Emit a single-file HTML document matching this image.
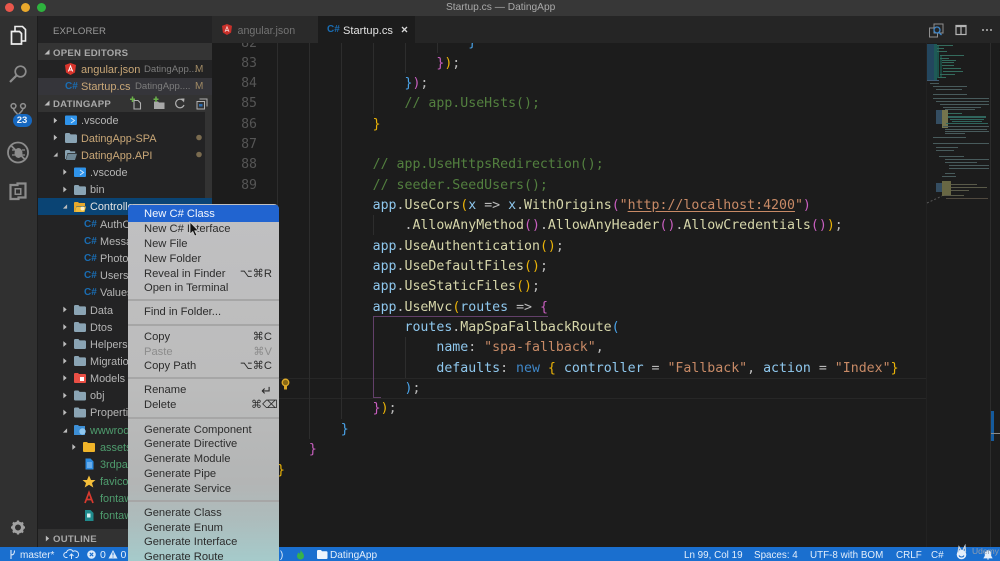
<!DOCTYPE html>
<html><head><meta charset="utf-8"><title>Startup.cs — DatingApp</title>
<style>
html,body{margin:0;padding:0;width:1000px;height:561px;overflow:hidden;background:#1e1e1e}
#root{position:relative;width:1000px;height:561px;overflow:hidden;font-family:"Liberation Sans",sans-serif;background:#1c1c1c;filter:blur(.35px)}
.a{position:absolute}
.t{position:absolute;white-space:pre;line-height:16px;height:16px}
/* sidebar */
.s{font-size:10.9px;color:#b5b5b5;margin-top:1px}
.o{color:#c9a777}.g{color:#4f9d6e}.w{color:#e4e4e4}
.h{font-size:9.6px;font-weight:bold;color:#a9a9a9;letter-spacing:.25px;margin-top:2px}
.cs{font-size:10px;font-weight:bold;color:#1a6db3;margin-top:1px}
/* code */
.l{position:absolute;left:277px;white-space:pre;height:20px;line-height:20px;margin-top:1.5px;font-family:"DejaVu Sans Mono","Liberation Mono",monospace;font-size:13.24px;color:#d4d4d4}
.n{position:absolute;left:227px;width:30px;text-align:right;height:20px;line-height:20px;margin-top:1.5px;font-family:"DejaVu Sans Mono","Liberation Mono",monospace;font-size:13.24px;color:#555}
.c{color:#53803f}.b{color:#8fc8ee}.f{color:#d6d6aa}.y{color:#eab308}.p{color:#c95fc0}.u{color:#4aa3e8}.q{color:#c88a66}.k{color:#3f87c8}.d{color:#bbb}
.gd{position:absolute;width:1px;background:#2d2d2d}
/* menu */
#m{position:absolute;left:128px;top:204px;width:151px;height:358px;border-radius:5px 5px 0 0;background:linear-gradient(#c0c0c2 0,#bcbcbc 50%,#b3b5b5 78%,#adbcbc 88%,#a5cbcb 100%);font-size:11.2px;color:#2c2c2c;overflow:hidden}
#m .i{position:absolute;left:16px;white-space:pre;line-height:15px;height:15px;margin-top:1px}
#m .r{position:absolute;right:7px;white-space:pre;line-height:15px;height:15px;margin-top:1px}
#m .sp{position:absolute;left:0;right:0;height:2px;background:#a6a6a6}
/* status */
.st{position:absolute;top:548px;white-space:pre;line-height:15px;height:15px;font-size:9.85px;color:#e4eefa}
</style></head><body><div id="root">

<svg width="0" height="0" style="position:absolute">
<defs>
<symbol id="fld" viewBox="0 0 12 10"><path d="M0 1.2C0 .5.5 0 1.2 0H4.4L5.6 1.4H10.8C11.5 1.4 12 1.9 12 2.6V8.8C12 9.5 11.5 10 10.8 10H1.2C.5 10 0 9.500 0 8.800Z" fill="#8aa4b4"/></symbol>
<symbol id="fldo" viewBox="0 0 12 10"><path d="M0 1.2C0 .5.5 0 1.2 0H4.4L5.6 1.4H10.200V3H2.500L.8 9.200 0 8.800Z" fill="#8aa4b4"/><path d="M2.800 3.800H12L10 10H1Z" fill="#6f8795"/></symbol>
<symbol id="tr" viewBox="0 0 6 8"><path d="M1 .5L5 4 1 7.500Z" fill="#bdbdbd"/></symbol>
<symbol id="td" viewBox="0 0 6 6"><path d="M5.500 .5V5.500H.5Z" fill="#bdbdbd"/></symbol>
</defs>
</svg>

<!-- title bar -->
<div class="a" style="left:0;top:0;width:1000px;height:16px;background:#373737"></div>
<div class="a" style="left:4.500px;top:2.500px;width:9px;height:9px;border-radius:50%;background:#e9574c"></div>
<div class="a" style="left:20.500px;top:2.500px;width:9px;height:9px;border-radius:50%;background:#eaa92c"></div>
<div class="a" style="left:36.500px;top:2.500px;width:9px;height:9px;border-radius:50%;background:#2eb33e"></div>
<div class="t" style="left:446px;top:0;font-size:10.200px;color:#a9a9a9">Startup.cs — DatingApp</div>

<!-- activity bar -->
<div class="a" style="left:0;top:16px;width:37px;height:531px;background:#303030"></div>
<svg class="a" style="left:0;top:16px" width="37" height="531" viewBox="0 16 37 531" fill="none">
 <path d="M15 26.500H22.500L25.500 29.500V41H15Z" stroke="#eee" stroke-width="1.600" fill="#303030" transform="translate(0,0)"/>
 <path d="M11.500 31.500H19.500L21.500 33.500V44H11.500Z" stroke="#eee" stroke-width="1.700" fill="#303030"/>
 <circle cx="20.500" cy="71.500" r="5.300" stroke="#8c8c8c" stroke-width="1.700"/>
 <path d="M16.500 75.500L10 82" stroke="#8c8c8c" stroke-width="2.200"/>
 <circle cx="13.500" cy="106" r="2.400" stroke="#909090" stroke-width="1.500"/><circle cx="23" cy="106" r="2.400" stroke="#909090" stroke-width="1.500"/>
 <path d="M13.500 108.500C14 112 18 113 18 116M23 108.500C22.500 112 18.500 113 18 116" stroke="#909090" stroke-width="1.500"/>
 <circle cx="18" cy="152.500" r="10" stroke="#8c8c8c" stroke-width="1.800"/>
 <path d="M11 145.500L25 159.500" stroke="#8c8c8c" stroke-width="1.800"/>
 <ellipse cx="18.500" cy="153" rx="4" ry="5" fill="#8c8c8c"/>
 <path d="M12 150h3M22 150h3M12 155h3M22 155h3" stroke="#8c8c8c" stroke-width="1.200"/>
 <path d="M10.500 185H17.500V183.500H25.500V197.500H18.500V199H10.500Z" stroke="#8c8c8c" stroke-width="2.200"/>
 <rect x="14.500" y="188" width="7" height="7" fill="#8c8c8c"/>
 <rect x="16" y="189.500" width="4" height="4" fill="#303030"/>
 <circle cx="18" cy="527.500" r="4.500" stroke="#a2a2a2" stroke-width="3"/>
 <path d="M18 520.500v2.500M18 532v2.500M11 527.500h2.500M22.500 527.500H25M13 522.500l1.800 1.800M21.200 530.700l1.800 1.800M13 532.500l1.800-1.800M21.200 524.300l1.800-1.800" stroke="#a2a2a2" stroke-width="2.200"/>
</svg>
<div class="a" style="left:12.500px;top:113.500px;width:19px;height:13.500px;border-radius:7px;background:#1668c0;color:#eaf2fb;font-size:9.500px;font-weight:bold;text-align:center;line-height:14px">23</div>

<!-- sidebar -->
<div class="a" style="left:38px;top:16px;width:174px;height:531px;background:#232324"></div>
<div class="a" style="left:205px;top:112px;width:7px;height:95px;background:#333"></div>
<div class="a" style="left:38px;top:43px;width:174px;height:17px;background:#343434"></div>
<div class="a" style="left:38px;top:78px;width:174px;height:17px;background:#35353a"></div>
<div class="a" style="left:38px;top:95px;width:174px;height:17px;background:#333"></div>
<div class="a" style="left:38px;top:198px;width:174px;height:17px;background:#0a4474"></div>
<div class="a" style="left:38px;top:529px;width:174px;height:18px;background:#323232"></div>

<div class="t" style="left:53px;top:24px;font-size:9.600px;color:#9a9a9a;letter-spacing:.1px">EXPLORER</div>
<svg class="a" style="left:44px;top:49px" width="6" height="6"><use href="#td"/></svg>
<div class="t h" style="left:53px;top:44px">OPEN EDITORS</div>
<svg class="a" style="left:65px;top:63px" width="11" height="12" viewBox="0 0 11 12"><path d="M5.500 0L11 2 10 9.500 5.500 12 1 9.500 0 2Z" fill="#d9342c"/><path d="M3.300 8.500L5.500 3 7.700 8.500M4 7H7" stroke="#fff" stroke-width="1" fill="none"/></svg>
<div class="t s o" style="left:81px;top:61px;font-weight:500;font-size:11px">angular.json</div>
<div class="t" style="left:144px;top:62px;font-size:9.600px;color:#7d7d7d">DatingApp...</div>
<div class="t" style="left:195px;top:62px;font-size:10px;color:#a08a64">M</div>
<div class="t cs" style="left:65px;top:78px">C#</div>
<div class="t s o" style="left:81px;top:78px;font-size:11px">Startup.cs</div>
<div class="t" style="left:135px;top:79px;font-size:9.600px;color:#7d7d7d">DatingApp....</div>
<div class="t" style="left:195px;top:79px;font-size:10px;color:#a08a64">M</div>

<svg class="a" style="left:44px;top:100px" width="6" height="6"><use href="#td"/></svg>
<div class="t h" style="left:53px;top:95px">DATINGAPP</div>
<svg class="a" style="left:128px;top:96px" width="84" height="15" fill="none">
 <path d="M6 4.500H10L12.500 7V13H6Z" stroke="#b0b0b0" stroke-width="1.100"/><path d="M4.500 0.500V6M2 3.200H7" stroke="#6bb24a" stroke-width="1.500"/>
 <path d="M26 5.500H30L31 6.500H36.500V13H26Z" fill="#a8a8a8"/><path d="M28 0.500V6M25.500 3.200H30.500" stroke="#6bb24a" stroke-width="1.500"/>
 <path d="M55.500 5A4.300 4.300 0 1 0 56 9" stroke="#b0b0b0" stroke-width="1.200"/><path d="M53 2.500L56.500 2.500 56 6.500Z" fill="#b0b0b0"/>
 <rect x="69" y="5.500" width="7.500" height="7.500" stroke="#b0b0b0"/><path d="M71.500 3H79V10.500" stroke="#b0b0b0"/><rect x="71" y="8" width="3.500" height="2.500" fill="#2a6bb0"/>
</svg>

<!-- tree -->
<svg class="a" style="left:38px;top:112px" width="174" height="417" viewBox="38 112 174 417" fill="none">
 <use href="#tr" x="53" y="117" width="5" height="7"/>
 <rect x="65" y="115.500" width="12" height="9.500" rx="1" fill="#2f93ea"/><path d="M71 118l3.500 2.500-3.500 2.500" stroke="#cfe6fb" stroke-width="1"/>
 <use href="#tr" x="53" y="134" width="5" height="7"/>
 <use href="#fld" x="65" y="133" width="12" height="10"/>
 <circle cx="199" cy="137.500" r="2.800" fill="#7a6b4f"/>
 <use href="#td" x="53" y="152" width="5" height="5"/>
 <use href="#fldo" x="65" y="150" width="12" height="10"/>
 <circle cx="199" cy="154.500" r="2.800" fill="#7a6b4f"/>
 <use href="#tr" x="62.500" y="168.500" width="5" height="7"/>
 <rect x="74" y="167.500" width="12" height="9.500" rx="1" fill="#2f93ea"/><path d="M80 170l3.500 2.500-3.500 2.500" stroke="#cfe6fb" stroke-width="1"/>
 <use href="#tr" x="62.500" y="186" width="5" height="7"/>
 <use href="#fld" x="74" y="185" width="12" height="10"/>
 <use href="#td" x="62.500" y="204" width="5" height="5"/>
 <path d="M74 203C74 202.400 74.500 202 75 202H78L79 203H85V206H76.500L75 212H74Z" fill="#e6a92c"/><path d="M76.500 206.500H86L84.500 212H75Z" fill="#f0bc3c"/><circle cx="82.500" cy="208.500" r="2" fill="#fff3c4"/>
 <use href="#tr" x="62.500" y="306" width="5" height="7"/>
 <use href="#fld" x="74" y="305" width="12" height="10"/>
 <use href="#tr" x="62.500" y="323.500" width="5" height="7"/>
 <use href="#fld" x="74" y="322" width="12" height="10"/>
 <use href="#tr" x="62.500" y="340.500" width="5" height="7"/>
 <use href="#fld" x="74" y="339" width="12" height="10"/>
 <use href="#tr" x="62.500" y="357.500" width="5" height="7"/>
 <use href="#fld" x="74" y="356" width="12" height="10"/>
 <use href="#tr" x="62.500" y="374.500" width="5" height="7"/>
 <path d="M74 374C74 373.400 74.500 373 75 373H78L79 374H85C85.500 374 86 374.500 86 375V382C86 382.600 85.500 383 85 383H75C74.500 383 74 382.600 74 382Z" fill="#ea4f45"/><rect x="80" y="377" width="4" height="4" fill="#fff"/>
 <use href="#tr" x="62.500" y="392" width="5" height="7"/>
 <use href="#fld" x="74" y="390.500" width="12" height="10"/>
 <use href="#tr" x="62.500" y="409" width="5" height="7"/>
 <use href="#fld" x="74" y="407.500" width="12" height="10"/>
 <use href="#td" x="62.500" y="428" width="5" height="5"/>
 <path d="M74 426C74 425.400 74.500 425 75 425H78L79 426H85V435H74Z" fill="#3d8fd6"/><circle cx="82.500" cy="431.500" r="3.200" fill="#8fc7f0"/>
 <use href="#tr" x="71.500" y="443.500" width="5" height="7"/>
 <path d="M83 443C83 442.400 83.500 442 84 442H87L88 443H94C94.600 443 95 443.400 95 444V451C95 451.600 94.600 452 94 452H84C83.500 452 83 451.600 83 451Z" fill="#f0b429"/>
 <path d="M85.500 458.500H90.500L93.500 461.500V469.500H85.500Z" fill="#2d8be0"/><path d="M87 463h5M87 465h5M87 467h5" stroke="#cde5fa" stroke-width=".8"/>
 <path d="M89 475.500L91 480H95.500L92 483 93.300 487.500 89 484.800 84.700 487.500 86 483 82.500 480H87Z" fill="#f5bf3a"/>
 <path d="M85 503L89 492.500 93 503M86.500 499.500H91.500" stroke="#d93a2f" stroke-width="1.700"/>
 <path d="M85 510H90.500L93.500 513V521H85Z" fill="#1f8a8c"/><rect x="87" y="513.500" width="3.500" height="4" fill="#d5f0f0"/>
</svg>

<div class="t s" style="left:81px;top:112px">.vscode</div>
<div class="t s o" style="left:81px;top:130px">DatingApp-SPA</div>
<div class="t s o" style="left:81px;top:147px">DatingApp.API</div>
<div class="t s" style="left:90px;top:164px">.vscode</div>
<div class="t s" style="left:90px;top:181px">bin</div>
<div class="t s w" style="left:90px;top:198px">Controllers</div>
<div class="t cs" style="left:84px;top:216px">C#</div><div class="t s" style="left:100px;top:216px">AuthController.cs</div>
<div class="t cs" style="left:84px;top:233px">C#</div><div class="t s" style="left:100px;top:233px">MessagesController.cs</div>
<div class="t cs" style="left:84px;top:250px">C#</div><div class="t s" style="left:100px;top:250px">PhotosController.cs</div>
<div class="t cs" style="left:84px;top:267px">C#</div><div class="t s" style="left:100px;top:267px">UsersController.cs</div>
<div class="t cs" style="left:84px;top:284px">C#</div><div class="t s" style="left:100px;top:284px">ValuesController.cs</div>
<div class="t s" style="left:90px;top:302px">Data</div>
<div class="t s" style="left:90px;top:319px">Dtos</div>
<div class="t s" style="left:90px;top:336px">Helpers</div>
<div class="t s" style="left:90px;top:353px">Migrations</div>
<div class="t s" style="left:90px;top:370px">Models</div>
<div class="t s" style="left:90px;top:387px">obj</div>
<div class="t s" style="left:90px;top:404px">Properties</div>
<div class="t s g" style="left:90px;top:422px">wwwroot</div>
<div class="t s g" style="left:100px;top:439px">assets</div>
<div class="t s g" style="left:100px;top:456px">3rdpartylicenses.txt</div>
<div class="t s g" style="left:100px;top:473px">favicon.ico</div>
<div class="t s g" style="left:100px;top:490px">fontawesome-webfont</div>
<div class="t s g" style="left:100px;top:507px">fontawesome-webfont</div>
<svg class="a" style="left:45px;top:535px" width="5" height="7"><use href="#tr" width="5" height="7"/></svg>
<div class="t h" style="left:53px;top:530px">OUTLINE</div>

<!-- editor -->
<div class="a" style="left:212px;top:43px;width:778px;height:504px;background:#1c1c1c"></div>
<div class="a" style="left:279px;top:378px;width:647px;height:19px;border-top:1px solid #272727;border-bottom:1px solid #272727"></div>

<!-- indent guides -->
<div class="gd" style="left:277px;top:43px;height:417px"></div>
<div class="gd" style="left:309px;top:43px;height:396px"></div>
<div class="gd" style="left:341px;top:43px;height:376px"></div>
<div class="gd" style="left:373px;top:43px;height:71px"></div>
<div class="gd" style="left:405px;top:43px;height:30px"></div>
<div class="gd" style="left:437px;top:43px;height:10px"></div>
<div class="gd" style="left:373px;top:215px;height:20px"></div>
<div class="gd" style="left:405px;top:337px;height:41px"></div>

<!-- bracket highlight -->
<div class="a" style="left:373px;top:315.500px;width:175px;height:1px;background:#63406a"></div>
<div class="a" style="left:373px;top:316px;width:1px;height:81px;background:#63406a"></div>
<div class="a" style="left:373px;top:396.500px;width:8px;height:1px;background:#63406a"></div>

<div class="n" style="top:32px">82</div>
<div class="n" style="top:52px">83</div>
<div class="n" style="top:72.350px">84</div>
<div class="n" style="top:92.700px">85</div>
<div class="n" style="top:113px">86</div>
<div class="n" style="top:133.400px">87</div>
<div class="n" style="top:153.750px">88</div>
<div class="n" style="top:174.100px">89</div>

<div class="l" style="top:31.650px">                        <span class="u">}</span></div>
<div class="l" style="top:52px">                    <span class="p">}</span><span class="y">)</span><span class="d">;</span></div>
<div class="l" style="top:72.350px">                <span class="u">}</span><span class="p">)</span><span class="d">;</span></div>
<div class="l c" style="top:92.700px">                // app.UseHsts();</div>
<div class="l" style="top:113.050px">            <span class="y">}</span></div>
<div class="l c" style="top:153.750px">            // app.UseHttpsRedirection();</div>
<div class="l c" style="top:174.100px">            // seeder.SeedUsers();</div>
<div class="l" style="top:194.450px">            <span class="b">app</span><span class="d">.</span><span class="f">UseCors</span><span class="y">(</span><span class="b">x</span> <span class="d">=&gt;</span> <span class="b">x</span><span class="d">.</span><span class="f">WithOrigins</span><span class="p">(</span><span class="q">"<span style="text-decoration:underline;text-underline-offset:2px">http://localhost:4200</span>"</span><span class="p">)</span></div>
<div class="l" style="top:214.800px">                <span class="d">.</span><span class="f">AllowAnyMethod</span><span class="p">()</span><span class="d">.</span><span class="f">AllowAnyHeader</span><span class="p">()</span><span class="d">.</span><span class="f">AllowCredentials</span><span class="p">()</span><span class="y">)</span><span class="d">;</span></div>
<div class="l" style="top:235.150px">            <span class="b">app</span><span class="d">.</span><span class="f">UseAuthentication</span><span class="y">()</span><span class="d">;</span></div>
<div class="l" style="top:255.500px">            <span class="b">app</span><span class="d">.</span><span class="f">UseDefaultFiles</span><span class="y">()</span><span class="d">;</span></div>
<div class="l" style="top:275.850px">            <span class="b">app</span><span class="d">.</span><span class="f">UseStaticFiles</span><span class="y">()</span><span class="d">;</span></div>
<div class="l" style="top:296.200px">            <span class="b">app</span><span class="d">.</span><span class="f">UseMvc</span><span class="y">(</span><span class="b">routes</span> <span class="d">=&gt;</span> <span class="p">{</span></div>
<div class="l" style="top:316.550px">                <span class="b">routes</span><span class="d">.</span><span class="f">MapSpaFallbackRoute</span><span class="u">(</span></div>
<div class="l" style="top:336.900px">                    <span class="b">name</span><span class="d">:</span> <span class="q">"spa-fallback"</span><span class="d">,</span></div>
<div class="l" style="top:357.250px">                    <span class="b">defaults</span><span class="d">:</span> <span class="k">new</span> <span class="y">{</span> <span class="b">controller</span> <span class="d">=</span> <span class="q">"Fallback"</span><span class="d">,</span> <span class="b">action</span> <span class="d">=</span> <span class="q">"Index"</span><span class="y">}</span></div>
<div class="l" style="top:377.600px">                <span class="u">)</span><span class="d">;</span></div>
<div class="l" style="top:397.950px">            <span class="p">}</span><span class="y">)</span><span class="d">;</span></div>
<div class="l" style="top:418.300px">        <span class="u">}</span></div>
<div class="l" style="top:438.650px">    <span class="p">}</span></div>
<div class="l" style="top:459px"><span class="y">}</span></div>

<!-- lightbulb -->
<svg class="a" style="left:281px;top:378px" width="9" height="13" viewBox="0 0 9 13"><circle cx="4.500" cy="4.500" r="3.300" fill="#8a6a14" stroke="#e0ac2a" stroke-width="1.300"/><rect x="3" y="8" width="3" height="3.500" fill="#d9a72a"/></svg>

<!-- minimap -->
<div class="a" style="left:926px;top:43px;width:1px;height:504px;background:#222"></div>
<div class="a" style="left:990px;top:43px;width:1px;height:504px;background:#2d2d2d"></div>
<svg class="a" style="left:926px;top:43px;opacity:.8" width="64" height="170" viewBox="926 43 64 170">
 <rect x="927" y="44" width="7" height="36" fill="#25516f"/>
 <rect x="934" y="44" width="3" height="36" fill="#1f6a66"/>
 <rect x="937" y="46" width="2" height="32" fill="#1b7a6c" opacity=".75"/>
 <rect x="940" y="55" width="2" height="22" fill="#1b7a6c" opacity=".55"/>
 <g fill="#3a7f6e">
  <rect x="937" y="45" width="16" height="1"/><rect x="937" y="48" width="7" height="1"/><rect x="937" y="51" width="10" height="1"/>
  <rect x="940" y="55" width="24" height="1"/><rect x="940" y="58" width="9" height="1"/><rect x="942" y="60" width="14" height="1"/><rect x="942" y="62" width="12" height="1"/>
  <rect x="942" y="65" width="12" height="1"/><rect x="943" y="68" width="18" height="1"/><rect x="943" y="71" width="20" height="1"/><rect x="940" y="74" width="15" height="1"/><rect x="938" y="77" width="8" height="1"/>
 </g>
 <rect x="927" y="80" width="12" height="1" fill="#4a6d8a"/>
 <g fill="#546b6d">
  <rect x="930" y="83" width="9" height="1"/><rect x="933" y="86" width="34" height="1"/><rect x="936" y="89" width="26" height="1"/><rect x="933" y="94" width="34" height="1"/>
  <rect x="933" y="98" width="56" height="1"/><rect x="936" y="101" width="53" height="1"/><rect x="940" y="104" width="49" height="1"/><rect x="943" y="107" width="38" height="1"/><rect x="945" y="109" width="30" height="1"/>
 </g>
 <rect x="936" y="110" width="6" height="14" fill="#3b5a73"/><rect x="942" y="110" width="6" height="18" fill="#8a8a5a"/><rect x="948" y="113" width="14" height="1" fill="#3a7f6e"/>
 <g fill="#35786e"><rect x="948" y="116" width="38" height="2"/><rect x="950" y="119" width="34" height="1"/><rect x="952" y="121" width="30" height="1"/><rect x="946" y="123" width="42" height="1"/></g>
 <g fill="#546b6d">
  <rect x="943" y="126" width="46" height="1"/><rect x="945" y="129" width="42" height="1"/><rect x="945" y="131" width="44" height="1"/><rect x="945" y="133" width="20" height="1"/><rect x="933" y="137" width="33" height="1"/>
  <rect x="933" y="143" width="56" height="1"/><rect x="936" y="147" width="22" height="1"/><rect x="936" y="150" width="18" height="1"/><rect x="939" y="156" width="25" height="1"/><rect x="945" y="159" width="44" height="1"/>
  <rect x="945" y="162" width="32" height="1"/><rect x="949" y="165" width="40" height="1"/><rect x="949" y="168" width="40" height="1"/><rect x="945" y="173" width="10" height="1"/><rect x="942" y="176" width="14" height="1"/>
 </g>
 <rect x="936" y="183" width="6" height="9" fill="#3b5a73"/><rect x="942" y="181" width="9" height="15" fill="#7b7a4f"/>
 <g fill="#6a6a55"><rect x="951" y="184" width="26" height="1"/><rect x="951" y="187" width="36" height="1"/><rect x="951" y="190" width="18" height="1"/><rect x="944" y="195" width="20" height="1"/><rect x="946" y="198" width="42" height="1" fill="#5d5548"/></g>
 <path d="M927 203L942 196" stroke="#666" stroke-dasharray="2 2" stroke-width="1" fill="none"/>
</svg>
<div class="a" style="left:991px;top:411px;width:3px;height:30px;background:#155a9c"></div>
<div class="a" style="left:991px;top:433px;width:9px;height:1px;background:#8a8a8a"></div>

<!-- tabs -->
<div class="a" style="left:212px;top:16px;width:788px;height:27px;background:#252525"></div>
<div class="a" style="left:212px;top:16px;width:106px;height:27px;background:#2a2a2a"></div>
<div class="a" style="left:318px;top:16px;width:97px;height:27px;background:#1c1c1c"></div>
<svg class="a" style="left:221.500px;top:24px" width="10" height="11" viewBox="0 0 11 12"><path d="M5.500 0L11 2 10 9.500 5.500 12 1 9.500 0 2Z" fill="#c9302a"/><path d="M3.300 8.500L5.500 3 7.700 8.500M4 7H7" stroke="#f3c9c7" stroke-width="1" fill="none"/></svg>
<div class="t" style="left:237.500px;top:23px;font-size:10.700px;color:#737373">angular.json</div>
<div class="t cs" style="left:327px;top:21px">C#</div>
<div class="t" style="left:343px;top:23px;font-size:11.100px;color:#e2e2e2">Startup.cs</div>
<svg class="a" style="left:401px;top:26px" width="7" height="7"><path d="M1 1L6 6M6 1L1 6" stroke="#d8d8d8" stroke-width="1.300"/></svg>
<svg class="a" style="left:928px;top:22px" width="66" height="16" fill="none">
 <rect x="1.500" y="6" width="8" height="9" stroke="#8f8f8f"/><rect x="6" y="2" width="9" height="9" stroke="#8f8f8f" fill="#252525"/><circle cx="9" cy="8" r="3" stroke="#3f86c7" stroke-width="1.300"/><path d="M11 10.500L13.500 13" stroke="#3f86c7" stroke-width="1.300"/>
 <rect x="28" y="3.500" width="10" height="9" stroke="#b5b5b5" stroke-width="1.200"/><path d="M33 3.500V12.500M28 4.500H38" stroke="#b5b5b5" stroke-width="1.200"/>
 <circle cx="55" cy="8" r="1" fill="#b5b5b5"/><circle cx="59" cy="8" r="1" fill="#b5b5b5"/><circle cx="63" cy="8" r="1" fill="#b5b5b5"/>
</svg>

<!-- status bar -->
<div class="a" style="left:0;top:547px;width:1000px;height:14px;background:#1a6fcf"></div>
<svg class="a" style="left:0;top:547px" width="400" height="14" fill="none">
 <path d="M11 3V12M11 8C14 8 14.500 6 14.500 3.500" stroke="#dceafa" stroke-width="1.100"/>
 <path d="M67.500 10.500H66A2.500 2.500 0 0 1 66.500 5.500 3.500 3.500 0 0 1 73 4.500 3 3 0 0 1 77 10.500H75.500M71.500 12V7M69.500 9L71.500 7 73.500 9" stroke="#dceafa" stroke-width="1"/>
 <circle cx="91.500" cy="7.500" r="4.300" fill="#dceafa"/><path d="M89.800 5.800L93.200 9.200M93.200 5.800L89.800 9.200" stroke="#1a6fcf" stroke-width="1.100"/>
 <path d="M113 3L117.500 11.500H108.500Z" fill="#dceafa"/><path d="M113 5.500V8.500M113 9.500V10.500" stroke="#1a6fcf"/>
 <path d="M300.500 2C301 5 304 6 304 9A3.500 3.500 0 0 1 297 9C297 7.500 298 7 298 5.500 299 6 299.500 6.500 299.500 7 300.500 5.500 300.800 4 300.500 2Z" fill="#38b24a"/>
 <path d="M317 4C317 3.500 317.500 3 318 3H321L322 4.200H326.500C327 4.200 327.500 4.700 327.500 5.200V11C327.500 11.500 327 12 326.500 12H318C317.500 12 317 11.500 317 11Z" fill="#eef5fd"/>
</svg>
<div class="st" style="left:20px;font-size:10px">master*</div>
<div class="st" style="left:100px;font-size:10.500px">0</div>
<div class="st" style="left:120.500px;font-size:10.500px">0</div>
<div class="st" style="left:280px">)</div>
<div class="st" style="left:330px;font-size:10.100px">DatingApp</div>
<div class="st" style="left:684px">Ln 99, Col 19</div>
<div class="st" style="left:754px">Spaces: 4</div>
<div class="st" style="left:810px">UTF-8 with BOM</div>
<div class="st" style="left:896px">CRLF</div>
<div class="st" style="left:931px">C#</div>
<svg class="a" style="left:955px;top:544px" width="45" height="17" fill="none">
 <circle cx="6.500" cy="10.500" r="4.800" fill="#e4eefa"/><path d="M3 8.500L4 3 6 6M8 6L10 2 10.500 8" stroke="#c8d4e0" stroke-width="1.300"/><path d="M4 11.500C5 13.500 8 13.500 9 11.500" stroke="#1a6fcf"/>
 <path d="M29 14H37L35.800 12V9.500A2.300 2.300 0 0 0 30.200 9.500V12ZM32 15H34" fill="#e4eefa" stroke="#e4eefa" stroke-width=".8"/>
</svg>
<div class="t" style="left:972px;top:543px;font-size:8.500px;color:#8f9db0">Udemy</div>

<!-- context menu -->
<div id="m">
 <div class="a" style="left:0;top:1px;width:151px;height:16.500px;background:#2164d0"></div>
 <div class="i" style="top:1.500px;color:#f2f6fd">New C# Class</div>
 <div class="i" style="top:16.500px">New C# Interface</div>
 <div class="i" style="top:31.500px">New File</div>
 <div class="i" style="top:46.500px">New Folder</div>
 <div class="i" style="top:61.500px">Reveal in Finder</div><div class="r" style="top:61.500px">⌥⌘R</div>
 <div class="i" style="top:75.500px">Open in Terminal</div>
 <div class="sp" style="top:95px"></div>
 <div class="i" style="top:100px">Find in Folder...</div>
 <div class="sp" style="top:119.500px"></div>
 <div class="i" style="top:124.500px">Copy</div><div class="r" style="top:124.500px">⌘C</div>
 <div class="i" style="top:139.500px;color:#8c8c8c">Paste</div><div class="r" style="top:139.500px;color:#8c8c8c">⌘V</div>
 <div class="i" style="top:154px">Copy Path</div><div class="r" style="top:154px">⌥⌘C</div>
 <div class="sp" style="top:173px"></div>
 <div class="i" style="top:178px">Rename</div><div class="r" style="top:178px;font-size:13px">↵</div>
 <div class="i" style="top:193px">Delete</div><div class="r" style="top:193px;right:1px">⌘⌫</div>
 <div class="sp" style="top:212.500px"></div>
 <div class="i" style="top:217.500px">Generate Component</div>
 <div class="i" style="top:232px">Generate Directive</div>
 <div class="i" style="top:247px">Generate Module</div>
 <div class="i" style="top:261.500px">Generate Pipe</div>
 <div class="i" style="top:276.500px">Generate Service</div>
 <div class="sp" style="top:296px"></div>
 <div class="i" style="top:300.500px">Generate Class</div>
 <div class="i" style="top:315.500px">Generate Enum</div>
 <div class="i" style="top:330px">Generate Interface</div>
 <div class="i" style="top:344.500px">Generate Route</div>
</div>

<!-- mouse cursor -->
<svg class="a" style="left:188px;top:221px" width="12" height="18" viewBox="0 0 12 18"><path d="M2 1V13L4.800 10.500 6.800 15 8.800 14 6.800 9.800H10.500Z" fill="#111" stroke="#cfcfcf" stroke-width=".8"/></svg>

</div></body></html>
